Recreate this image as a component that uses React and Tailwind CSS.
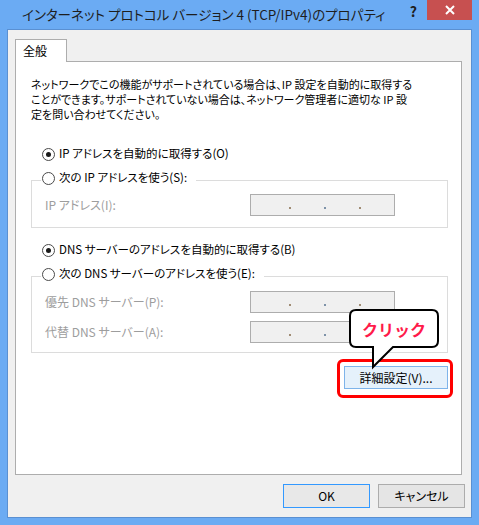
import React from 'react';

const font = "font-['Noto_Sans_CJK_JP','Noto_Sans',sans-serif]";

function Radio({ checked }) {
  return (
    <span className="w-[13px] h-[13px] rounded-full border border-[#4a4a4a] bg-white flex items-center justify-center shrink-0">
      {checked && <span className="w-[5px] h-[5px] rounded-full bg-[#1a1a1a]" />}
    </span>
  );
}

function RadioRow({ checked, children }) {
  return (
    <div className="h-[16px] flex items-center gap-[4px] text-[11.5px] text-black whitespace-nowrap">
      <Radio checked={checked} />
      <span>{children}</span>
    </div>
  );
}

function IpBox() {
  return (
    <div className="w-[145px] h-[22px] border border-[#adadad] bg-[#f0f0f0] flex items-end pb-[6px] pl-[38px] gap-[33px]">
      <span className="w-[2px] h-[2px] bg-[#a08c74]" />
      <span className="w-[2px] h-[2px] bg-[#7d92a8]" />
      <span className="w-[2px] h-[2px] bg-[#a08c74]" />
    </div>
  );
}

function Field({ label }) {
  return (
    <div className="flex items-center">
      <span className="w-[205px] text-[12px] text-[#9d9d9d] whitespace-nowrap">{label}</span>
      <IpBox />
    </div>
  );
}

function Group({ legend, children, className }) {
  return (
    <fieldset className={`border border-[#dcdcdc] ${className}`}>
      <legend className="-ml-[4px] pl-[1px] pr-[9px] h-[20px] flex items-start">
        <RadioRow>{legend}</RadioRow>
      </legend>
      {children}
    </fieldset>
  );
}

export default function App() {
  return (
    <div className={`relative w-[479px] h-[525px] bg-[#6babf3] flex flex-col px-[7px] pb-[7px] ${font} [font-feature-settings:'palt']`}>
      {/* title bar */}
      <div className="h-[29px] flex items-start shrink-0">
        <div className="flex-1 h-[28px] flex items-center pl-[15px] text-[13.5px] text-[#1e1e1e] whitespace-nowrap">
          インターネット プロトコル バージョン 4 (TCP/IPv4)のプロパティ
        </div>
        <div className="h-[22px] flex items-center mr-[10px] text-[14px] font-bold text-[#1e1e1e]">?</div>
        <div className="w-[45px] h-[20px] bg-[#c75050] flex items-center justify-center">
          <svg width="10" height="10" viewBox="0 0 10 10">
            <path d="M1 1 L9 9 M9 1 L1 9" stroke="white" strokeWidth="2" />
          </svg>
        </div>
      </div>

      {/* client area */}
      <div className="flex-1 border border-[#5a90d2] bg-[#f0f0f0] flex flex-col pl-[7px] pt-[9px]">
        <div className="w-[52px] h-[23px] -mb-[1px] relative z-10 border border-b-0 border-[#adadad] bg-white pl-[7px] pt-[2px] text-[12px] text-black">
          全般
        </div>
        <div className="w-[447px] h-[414px] border border-[#adadad] bg-white pt-[15px] pl-[15px] pr-[13px] flex flex-col">
          <p className="text-[11px] leading-[15px] text-black whitespace-nowrap">
            ネットワークでこの機能がサポートされている場合は、IP 設定を自動的に取得する
            <br />
            ことができます。サポートされていない場合は、ネットワーク管理者に適切な IP 設
            <br />
            定を問い合わせてください。
          </p>

          <div className="mt-[24px] ml-[11px]">
            <RadioRow checked>IP アドレスを自動的に取得する(O)</RadioRow>
          </div>
          <Group legend="次の IP アドレスを使う(S):" className="mt-[8px] pt-[4px] pb-[11px] pl-[13px]">
            <Field label="IP アドレス(I):" />
          </Group>

          <div className="mt-[14px] ml-[11px]">
            <RadioRow checked>DNS サーバーのアドレスを自動的に取得する(B)</RadioRow>
          </div>
          <Group legend="次の DNS サーバーのアドレスを使う(E):" className="mt-[8px] pt-[5px] pb-[9px] pl-[13px]">
            <Field label="優先 DNS サーバー(P):" />
            <div className="mt-[8px]">
              <Field label="代替 DNS サーバー(A):" />
            </div>
          </Group>

          <div className="mt-[6px] flex justify-end -mr-[5px]">
            <div className="border-[3px] border-[#ff0000] rounded-[6px] pl-[4px] pr-[2px] pt-[4px] pb-[6px]">
              <div className="w-[104px] h-[23px] border border-[#7eb4ea] bg-[#e5f1fb] flex items-center justify-center text-[12px] text-black">
                詳細設定(V)...
              </div>
            </div>
          </div>
        </div>

        <div className="mt-[9px] flex justify-end gap-[8px] pr-[6px]">
          <div className="w-[87px] h-[24px] border border-[#3399ff] bg-[#e8e8e8] flex items-center justify-center text-[12px] text-black">
            OK
          </div>
          <div className="w-[87px] h-[24px] border border-[#acacac] bg-[#e5e5e5] flex items-center justify-center text-[12px] text-black">
            キャンセル
          </div>
        </div>
      </div>

      {/* callout annotation */}
      <div className="absolute left-[348px] top-[308px] w-[94px] h-[62px]">
        <svg width="94" height="62" viewBox="0 0 94 62" className="absolute inset-0">
          <path
            d="M8 2 H84 Q90 2 90 8 V33 Q90 39 84 39 H45 L25 59 V39 H8 Q2 39 2 33 V8 Q2 2 8 2 Z"
            fill="white"
            stroke="black"
            strokeWidth="2"
          />
        </svg>
        <div className="absolute left-[2px] top-[2px] w-[88px] h-[37px] flex items-center justify-center text-[16px] font-bold text-[#ff1a4a] [font-feature-settings:normal]">
          クリック
        </div>
      </div>
    </div>
  );
}
